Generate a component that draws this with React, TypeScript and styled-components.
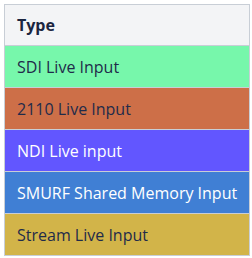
import React from "react";
import styled, { createGlobalStyle } from "styled-components";

const GlobalStyle = createGlobalStyle`
    body {
        margin: 0;
        background: #ffffff;
        font-family: "Open Sans", "Noto Sans", sans-serif;
    }
`

const TableWrapper = styled.div`
    padding: 4px;
    width: 244px;
`
const TypeTable = styled.table`
    width: 100%;
    border-collapse: collapse;
    border: 1px solid #c8ced6;
`
const HeaderCell = styled.th`
    background: #f3f4f6;
    color: #1b2540;
    font-size: 16px;
    font-weight: 700;
    text-align: left;
    height: 40px;
    padding: 0 12px;
    border-bottom: 1px solid #c8ced6;
`
const TypeCell = styled.td<{ $bg: string; $fg: string }>`
    background: ${(p) => p.$bg};
    color: ${(p) => p.$fg};
    font-size: 16px;
    height: 41px;
    padding: 0 12px;
    border-bottom: 1px solid #c8ced6;
    white-space: nowrap;
`

const DARK = "#1f2b4a";
const LIGHT = "#ffffff";

const inputTypes = [
    { name: "SDI Live Input", bg: "#77f7ab", fg: DARK },
    { name: "2110 Live Input", bg: "#cd6f48", fg: DARK },
    { name: "NDI Live input", bg: "#6256ff", fg: LIGHT },
    { name: "SMURF Shared Memory Input", bg: "#407fd4", fg: LIGHT },
    { name: "Stream Live Input", bg: "#d2b449", fg: DARK },
];

const App: React.FunctionComponent = () => {
    return (
        <TableWrapper>
            <GlobalStyle />
            <TypeTable>
                <thead>
                    <tr>
                        <HeaderCell>Type</HeaderCell>
                    </tr>
                </thead>
                <tbody>
                    {inputTypes.map((t) => (
                        <tr key={t.name}>
                            <TypeCell $bg={t.bg} $fg={t.fg}>{t.name}</TypeCell>
                        </tr>
                    ))}
                </tbody>
            </TypeTable>
        </TableWrapper>
    )
}

export default App;
